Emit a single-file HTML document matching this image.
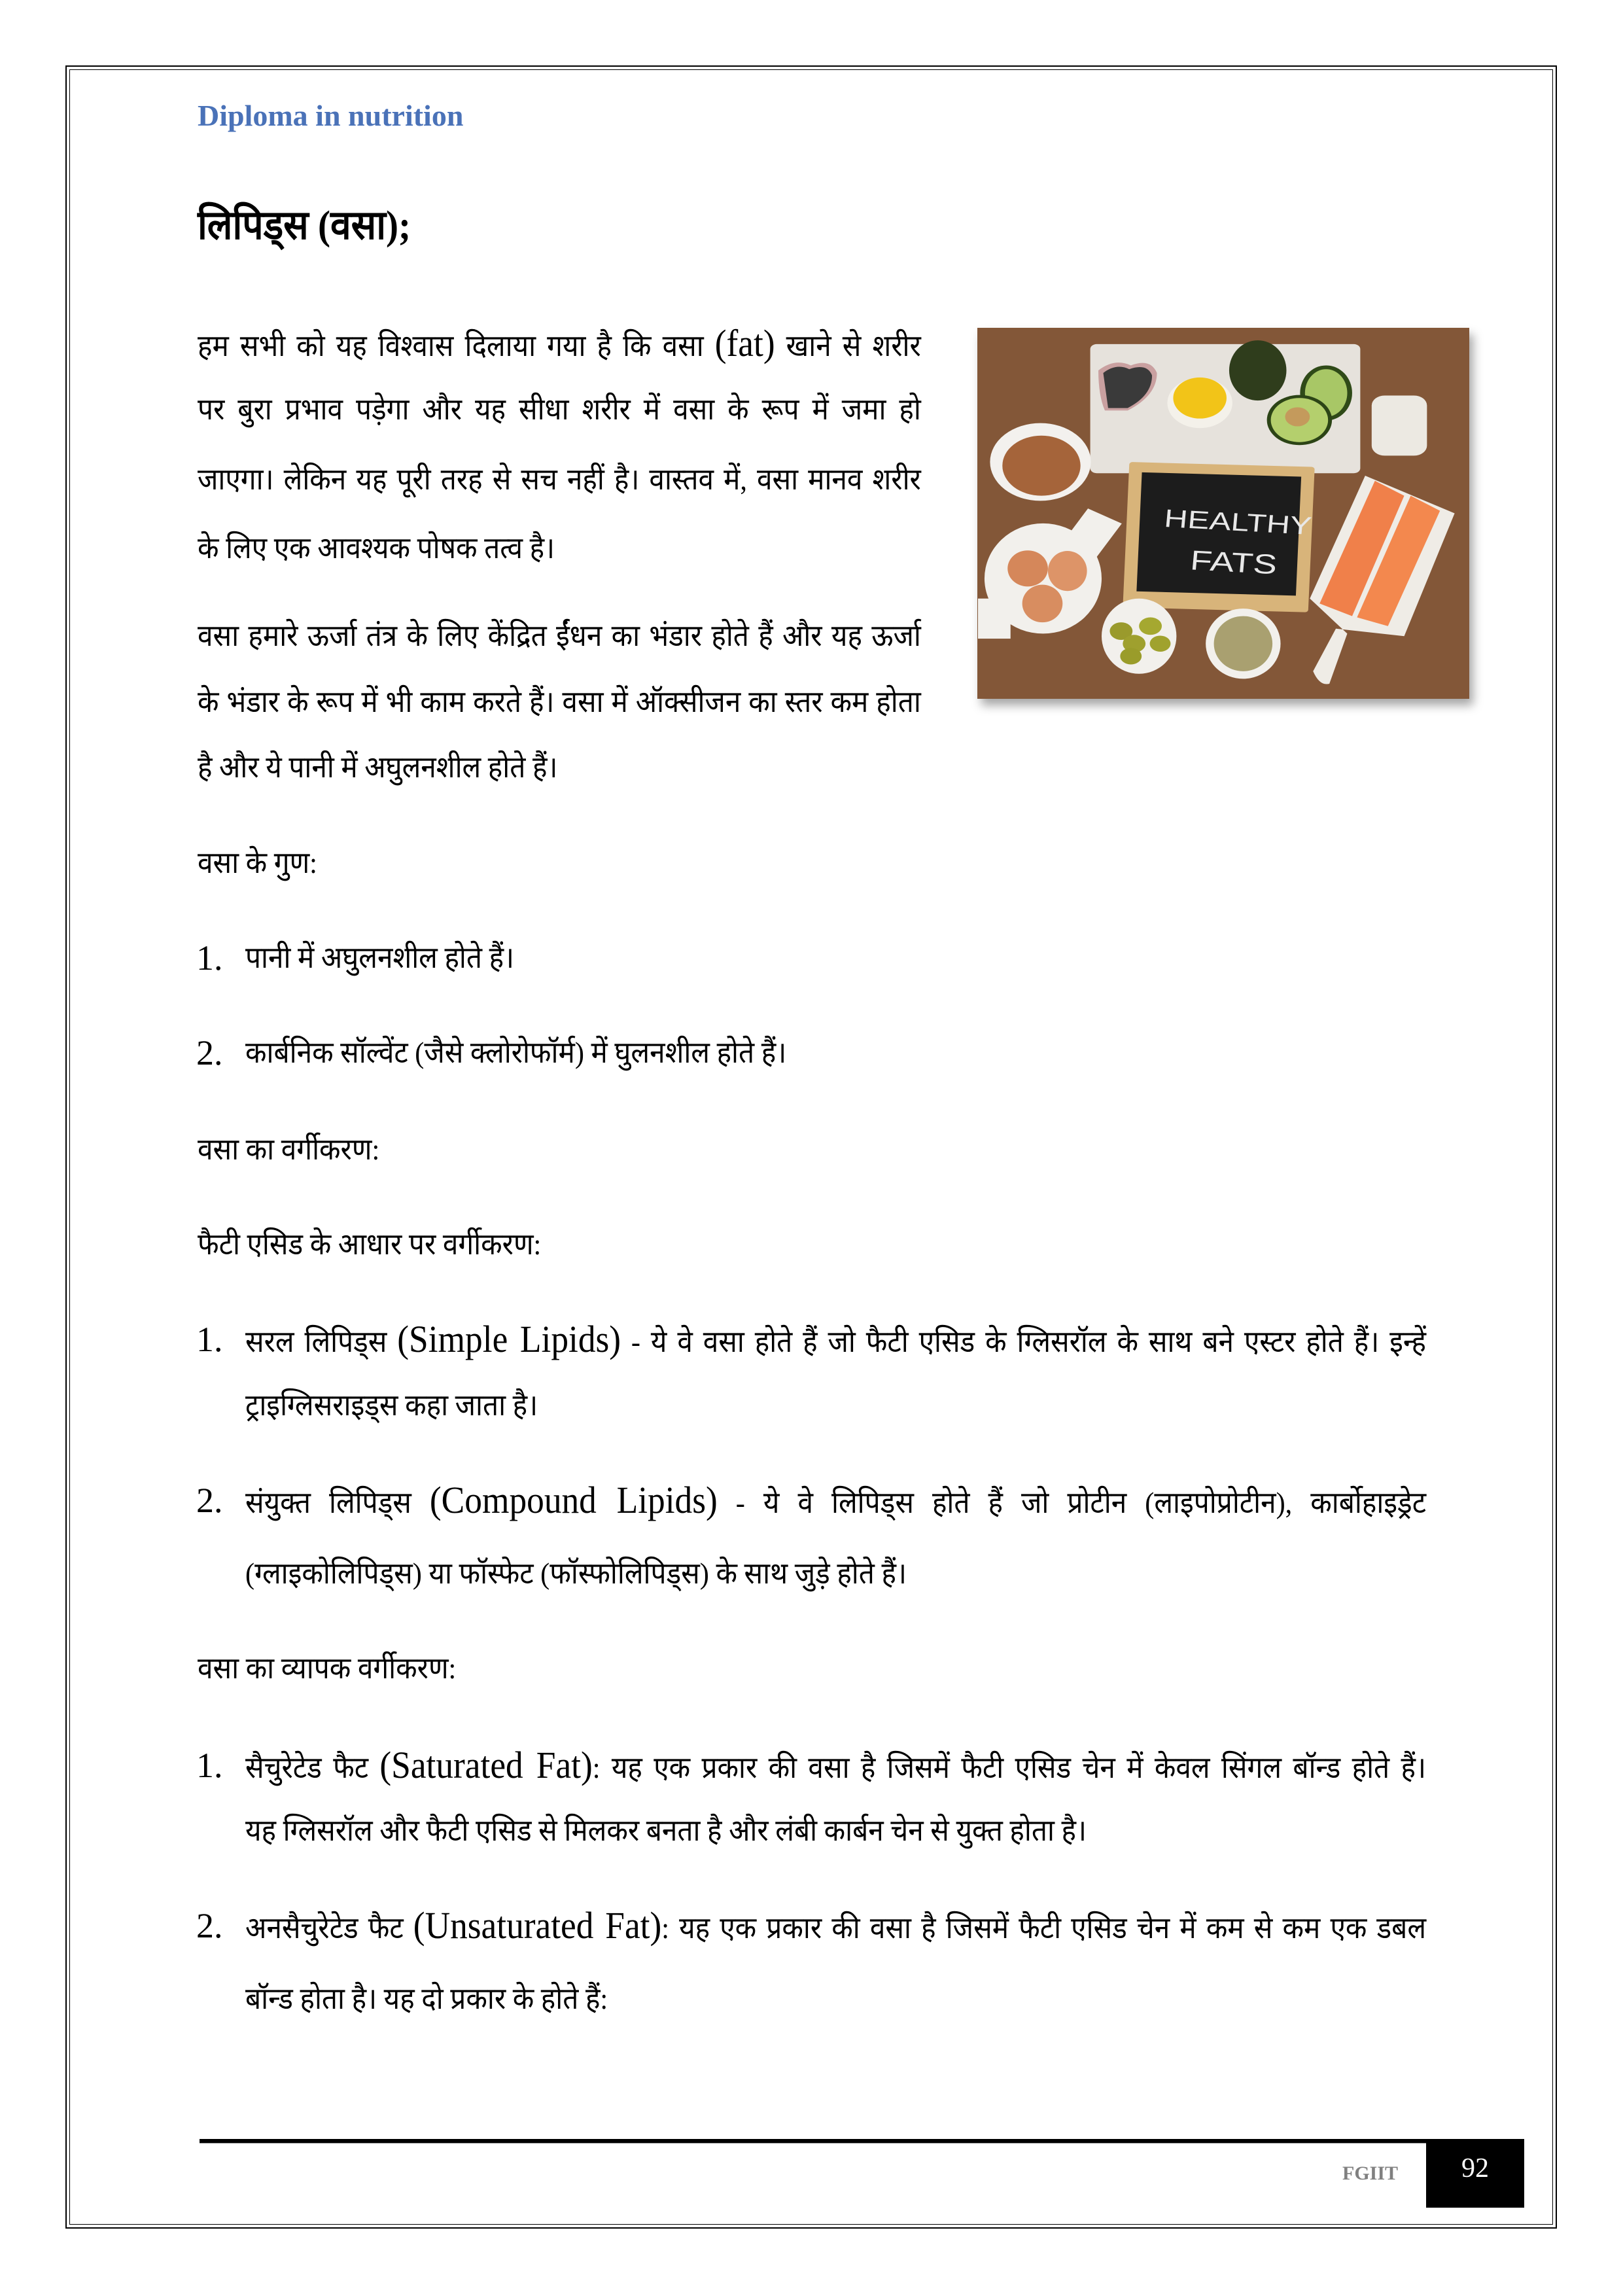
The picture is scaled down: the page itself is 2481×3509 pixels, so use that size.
<!DOCTYPE html>
<html><head><meta charset="utf-8"><style>
body{margin:0;width:2481px;height:3509px;background:#fff;position:relative;overflow:hidden;font-family:"Liberation Serif",serif;color:#000}
.b1{position:absolute;left:100px;top:100px;width:2280px;height:3306px;border:2px solid #000;box-sizing:border-box}
.b2{position:absolute;left:106px;top:106px;width:2268px;height:3294px;border:1px solid #000;box-sizing:border-box}
.l{position:absolute;height:70px;line-height:70px;font-size:46px;white-space:nowrap;overflow:visible;transform:scaleX(.92);transform-origin:0 0}
.j{text-align:justify;text-align-last:justify}
.w1{width:1202px}.w2{width:1962px}
.n{position:absolute;height:70px;line-height:70px;font-size:54px;left:300px}
.lat{font-size:58px}
</style></head><body>
<div class="b1"></div><div class="b2"></div>
<div class="l" style="left:302px;top:142px;font-size:46px;font-weight:bold;color:#4a72b8;transform:none">Diploma in nutrition</div>
<div class="l" style="left:302px;top:310px;font-size:62px;font-weight:bold">लिपिड्स (वसा);</div>

<div class="l j w1" style="left:302px;top:490px">हम सभी को यह विश्वास दिलाया गया है कि वसा <span class="lat">(fat)</span> खाने से शरीर</div>
<div class="l j w1" style="left:302px;top:591px">पर बुरा प्रभाव पड़ेगा और यह सीधा शरीर में वसा के रूप में जमा हो</div>
<div class="l j w1" style="left:302px;top:698px">जाएगा। लेकिन यह पूरी तरह से सच नहीं है। वास्तव में, वसा मानव शरीर</div>
<div class="l" style="left:302px;top:803px">के लिए एक आवश्यक पोषक तत्व है।</div>
<div class="l j w1" style="left:302px;top:937px">वसा हमारे ऊर्जा तंत्र के लिए केंद्रित ईंधन का भंडार होते हैं और यह ऊर्जा</div>
<div class="l j w1" style="left:302px;top:1038px">के भंडार के रूप में भी काम करते हैं। वसा में ऑक्सीजन का स्तर कम होता</div>
<div class="l" style="left:302px;top:1138px">है और ये पानी में अघुलनशील होते हैं।</div>

<svg style="position:absolute;left:1494px;top:501px;width:752px;height:567px;box-shadow:6px 10px 14px rgba(0,0,0,.35)" viewBox="28 30 1512 1480" preserveAspectRatio="none">
<rect x="28" y="30" width="1512" height="1480" fill="#7a5034"/>
<rect x="28" y="30" width="1512" height="1480" fill="#8b5e3c" opacity=".5"/>
<rect x="375" y="95" width="830" height="515" rx="20" fill="#e6e2dc"/>
<path d="M400 200 Q450 150 500 180 Q560 150 580 210 Q580 300 490 360 L420 360 Q400 300 400 200Z" fill="#c9a0a0"/>
<path d="M415 210 Q455 170 495 195 Q550 170 565 220 Q565 300 490 350 L430 350Z" fill="#3a3a3a"/>
<circle cx="712" cy="330" r="100" fill="#f4f1ea"/><circle cx="712" cy="310" r="82" fill="#f2c418"/>
<ellipse cx="890" cy="200" rx="88" ry="120" fill="#2f3d1c"/>
<ellipse cx="1100" cy="290" rx="80" ry="110" fill="#2f4a18"/><ellipse cx="1100" cy="290" rx="65" ry="95" fill="#a8c766"/>
<ellipse cx="1018" cy="398" rx="100" ry="100" fill="#2c4416"/><ellipse cx="1018" cy="398" rx="88" ry="88" fill="#b4cf6d"/><circle cx="1012" cy="385" r="38" fill="#c49a5c"/>
<rect x="1240" y="300" width="170" height="240" rx="40" fill="#ece9e2"/>
<circle cx="222" cy="565" r="155" fill="#f3f1ee"/><circle cx="225" cy="580" r="120" fill="#a5643a"/>
<ellipse cx="230" cy="1030" rx="180" ry="220" fill="#f2f0ec"/><rect x="30" y="1110" width="100" height="160" fill="#f2f0ec"/><rect x="320" y="770" width="120" height="160" fill="#f2f0ec" transform="rotate(30 380 850)"/>
<ellipse cx="183" cy="990" rx="62" ry="72" fill="#d5875a"/><ellipse cx="305" cy="1000" rx="60" ry="80" fill="#dd9468"/><ellipse cx="228" cy="1130" rx="62" ry="75" fill="#d88d60"/>
<rect x="485" y="575" width="570" height="580" rx="10" fill="#d8b47a" transform="rotate(2 770 865)"/>
<rect x="525" y="615" width="490" height="475" fill="#1c1c1c" transform="rotate(2 770 865)"/>
<text x="600" y="835" fill="#e8e8e8" font-family="Liberation Sans" font-size="100" transform="rotate(4 770 835)">HEALTHY</text>
<text x="680" y="1000" fill="#e8e8e8" font-family="Liberation Sans" font-size="110" transform="rotate(4 770 1000)">FATS</text>
<path d="M1220 620 L1495 770 L1340 1260 L1130 1230 L1060 1400 Q1080 1460 1110 1450 L1165 1250 L1050 1110Z" fill="#efece6"/>
<path d="M1250 640 L1340 700 L1180 1180 L1080 1130Z" fill="#f0804a"/><path d="M1360 700 L1450 760 L1290 1220 L1195 1185Z" fill="#f3884e"/>
<ellipse cx="525" cy="1260" rx="115" ry="150" fill="#f2f0ec"/>
<circle cx="470" cy="1240" r="35" fill="#9a9a2c"/><circle cx="560" cy="1220" r="35" fill="#a5a830"/><circle cx="510" cy="1290" r="35" fill="#9fa02e"/><circle cx="590" cy="1290" r="32" fill="#a0a22e"/><circle cx="500" cy="1340" r="33" fill="#9a9c2a"/>
<ellipse cx="845" cy="1290" rx="115" ry="140" fill="#f2f0ec"/><ellipse cx="845" cy="1290" rx="90" ry="110" fill="#a9a070"/>
</svg>

<div class="l" style="left:302px;top:1284px">वसा के गुण:</div>
<div class="n" style="top:1429px">1.</div><div class="l" style="left:375px;top:1429px">पानी में अघुलनशील होते हैं।</div>
<div class="n" style="top:1574px">2.</div><div class="l" style="left:375px;top:1574px">कार्बनिक सॉल्वेंट (जैसे क्लोरोफॉर्म) में घुलनशील होते हैं।</div>
<div class="l" style="left:302px;top:1722px">वसा का वर्गीकरण:</div>
<div class="l" style="left:302px;top:1867px">फैटी एसिड के आधार पर वर्गीकरण:</div>

<div class="n" style="top:2012px">1.</div><div class="l j w2" style="left:375px;top:2012px">सरल लिपिड्स <span class="lat">(Simple Lipids)</span> - ये वे वसा होते हैं जो फैटी एसिड के ग्लिसरॉल के साथ बने एस्टर होते हैं। इन्हें</div>
<div class="l" style="left:375px;top:2113px">ट्राइग्लिसराइड्स कहा जाता है।</div>
<div class="n" style="top:2258px">2.</div><div class="l j w2" style="left:375px;top:2258px">संयुक्त लिपिड्स <span class="lat">(Compound Lipids)</span> - ये वे लिपिड्स होते हैं जो प्रोटीन (लाइपोप्रोटीन), कार्बोहाइड्रेट</div>
<div class="l" style="left:375px;top:2370px">(ग्लाइकोलिपिड्स) या फॉस्फेट (फॉस्फोलिपिड्स) के साथ जुड़े होते हैं।</div>
<div class="l" style="left:302px;top:2515px">वसा का व्यापक वर्गीकरण:</div>

<div class="n" style="top:2663px">1.</div><div class="l j w2" style="left:375px;top:2663px">सैचुरेटेड फैट <span class="lat">(Saturated Fat)</span>: यह एक प्रकार की वसा है जिसमें फैटी एसिड चेन में केवल सिंगल बॉन्ड होते हैं।</div>
<div class="l" style="left:375px;top:2763px">यह ग्लिसरॉल और फैटी एसिड से मिलकर बनता है और लंबी कार्बन चेन से युक्त होता है।</div>
<div class="n" style="top:2908px">2.</div><div class="l j w2" style="left:375px;top:2908px">अनसैचुरेटेड फैट <span class="lat">(Unsaturated Fat)</span>: यह एक प्रकार की वसा है जिसमें फैटी एसिड चेन में कम से कम एक डबल</div>
<div class="l" style="left:375px;top:3020px">बॉन्ड होता है। यह दो प्रकार के होते हैं:</div>

<div style="position:absolute;left:305px;top:3269px;width:1875px;height:6px;background:#000;border-bottom:1px solid #999"></div>
<div style="position:absolute;left:2180px;top:3269px;width:150px;height:105px;background:#000;color:#fff;font-size:42px;text-align:center;line-height:90px">92</div>
<div style="position:absolute;left:2052px;top:3305px;font-size:30px;color:#808080;font-weight:bold">FGIIT</div>
</body></html>
